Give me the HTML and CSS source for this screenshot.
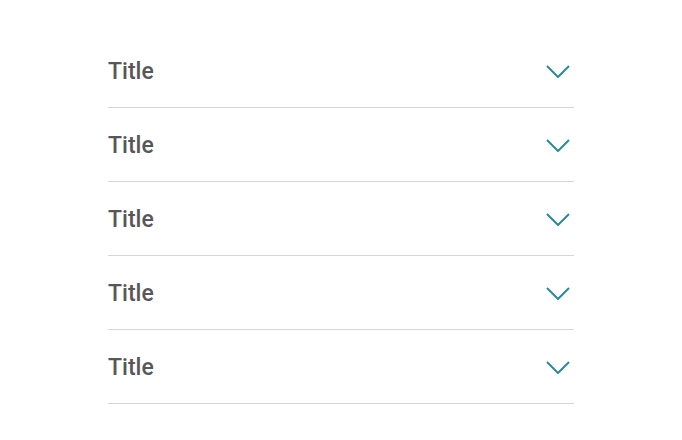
FILE: index.html
```html
<!DOCTYPE html>
<html>
<head>
<meta charset="utf-8">
<link rel="stylesheet" href="styles.css">
</head>
<body>
<div class="accordion">
  <div class="row"><span class="title">Title</span><svg class="chev" viewBox="0 0 24 13" width="24" height="13"><polyline points="1,1 12,12 23,1" /></svg></div>
  <div class="row"><span class="title">Title</span><svg class="chev" viewBox="0 0 24 13" width="24" height="13"><polyline points="1,1 12,12 23,1" /></svg></div>
  <div class="row"><span class="title">Title</span><svg class="chev" viewBox="0 0 24 13" width="24" height="13"><polyline points="1,1 12,12 23,1" /></svg></div>
  <div class="row"><span class="title">Title</span><svg class="chev" viewBox="0 0 24 13" width="24" height="13"><polyline points="1,1 12,12 23,1" /></svg></div>
  <div class="row"><span class="title">Title</span><svg class="chev" viewBox="0 0 24 13" width="24" height="13"><polyline points="1,1 12,12 23,1" /></svg></div>
</div>
</body>
</html>
```
FILE: styles.css
```css
html, body {
  margin: 0;
  padding: 0;
  background: #ffffff;
}
body {
  width: 682px;
  height: 440px;
  font-family: Roboto, "Liberation Sans", sans-serif;
}
.accordion {
  margin-left: 108px;
  width: 466px;
  padding-top: 34px;
  display: flex;
  flex-direction: column;
}
.row {
  height: 73px;
  border-bottom: 1px solid #d6d6d6;
  display: flex;
  align-items: center;
  justify-content: space-between;
}
.title {
  font-size: 23px;
  font-weight: 500;
  color: #575757;
  line-height: 1;
  margin-top: 1px;
}
.chev {
  margin-right: 4px;
  margin-top: 1px;
  fill: none;
  stroke: #2a8a99;
  stroke-width: 2;
}
```
